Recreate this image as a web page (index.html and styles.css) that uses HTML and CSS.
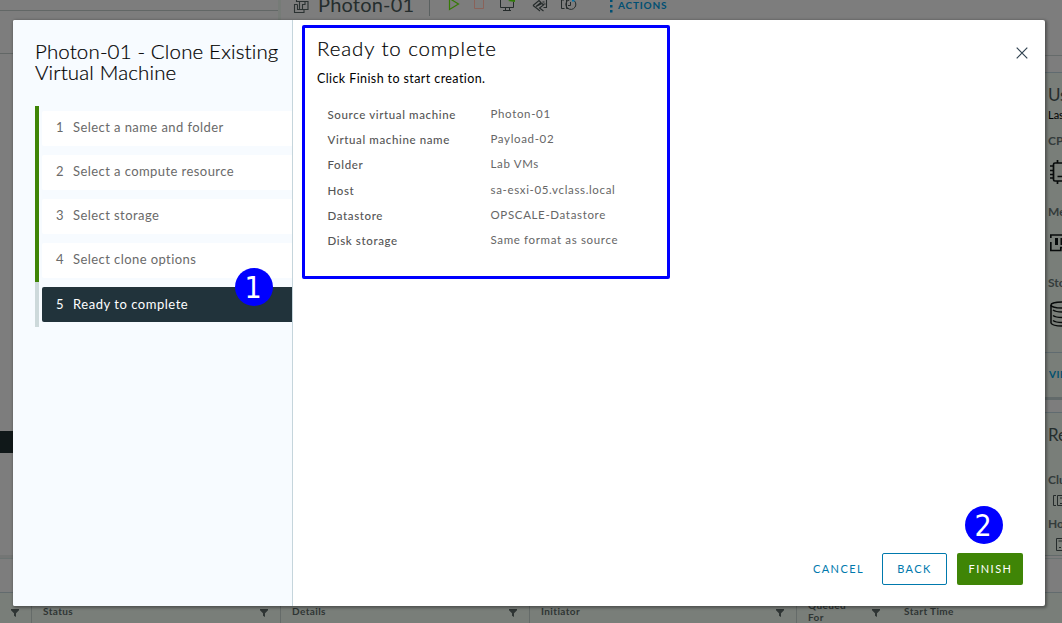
FILE: index.html
```html
<!DOCTYPE html>
<html lang="en">
<head>
<meta charset="utf-8">
<title>Photon-01 - Clone Existing Virtual Machine</title>
<link rel="stylesheet" href="styles.css">
</head>
<body>
<svg class="defs" width="0" height="0">
  <symbol id="filter" viewBox="0 0 8 8"><path d="M0 0h8v1.2L5 4.2v3.8L3 6.8V4.2L0 1.2z" fill="currentColor"/></symbol>
</svg>
<div class="app">
  <div class="workspace">
    <aside class="inventory">
      <div class="inv-head"></div>
      <div class="inv-tools"></div>
      <div class="inv-tree"><div class="inv-selected"></div></div>
    </aside>
    <div class="splitter"></div>
    <main class="object">
      <header class="object-head">
        <svg class="vm-icon" width="17" height="15" viewBox="0 0 17 15" fill="none" stroke="#2b3232" stroke-width="1.100"><path d="M4.500 4.500H1.500v8h9.500v-3M3.500 0v1.500h3M6.500 1.500h8.500v8h-8.500zM4.500 4.500v5h5v-5M12 1.500v3h-3"/></svg>
        <span class="object-name">Photon-01</span>
        <span class="head-divider"></span>
        <svg class="tools" width="130" height="16" viewBox="0 0 130 16" fill="none">
          <path d="M1.500 -1.500L10.500 4L1.500 9.500z" stroke="#367a05" stroke-width="1.200"/>
          <path d="M26.500 -2v10.500h9V-2" stroke="#8a6259"/>
          <g stroke="#252b2b"><path d="M52.500 -1v8.500h13V2M55 10.500h8M57.500 8v2.500M61.500 8v2.500"/></g>
          <path d="M60 1l5-3h2v4z" fill="#2f7a05"/>
          <g stroke="#252b2b" stroke-width="1.100"><path d="M88 -1h10.500v8.500h-3M85 5.500l6-5 2 2-5 4 6-3 1.500 1.500-4 3 4 3M85 5.500l4 3 3 2.500M94.500 2h2M95.500 4h2"/></g>
          <g stroke="#252b2b"><path d="M116 0h-2.500v8.500h3M121 0h-2.500v8.500h2M122 -.5a5 5 0 1 0 4.500 1.500M122.500 2v3.500h-2.500"/></g><path d="M124 -1h2.500v2.500H124z" fill="#0073a8"/>
        </svg>
        <svg class="dots" width="3" height="15" viewBox="0 0 3 15" fill="#004f73"><path d="M0 0h2.500v2H0zM0 5h2.500v2.500H0zM0 10h2.500v2.500H0z"/></svg>
        <span class="actions">ACTIONS</span>
      </header>
    </main>
    <section class="summary">
      <div class="sum-top"></div>
      <div class="sum-tabs"></div>
      <div class="card usage">
        <h3 class="card-title">Usage</h3>
        <p class="updated">Last updated</p>
        <p class="metric cpu">CPU</p>
        <svg class="m-icon" width="24" height="26" viewBox="0 0 24 26" fill="none" stroke="#080b0b" stroke-width="1.700"><rect x="3.500" y="4" width="18" height="18" rx="1.500"/><path d="M7.500 4V1M14 4V1M7.500 22v3M14 22v3M3.500 7H0M3.500 11.500H0M3.500 15.500H0M3.500 19H0M7.500 17.500h8"/></svg>
        <p class="metric mem">Memory</p>
        <svg class="m-icon" width="24" height="26" viewBox="0 0 24 26" fill="none" stroke="#080b0b" stroke-width="1.700"><path d="M.8 8V5h23v4M.8 12v8.500h10V17.500h3v3h10V12"/><path d="M6.500 8v7M12 8v7M17.500 8v7" stroke-width="3"/></svg>
        <p class="metric sto">Storage</p>
        <svg class="m-icon" width="24" height="26" viewBox="0 0 24 26" fill="none" stroke="#080b0b" stroke-width="1.500"><ellipse cx="12" cy="4" rx="11" ry="3"/><path d="M1 4v18c2 4 20 4 22 0V4M3 9c2 1.500 5 2 9 2s8-.5 10-2M3 14.500c2 1.500 5 2 9 2s8-.5 10-2M3 19.500c2 1.500 5 2 9 2s8-.5 10-2"/></svg>
        <div class="card-foot">VIEW STATS</div>
      </div>
      <div class="card related">
        <h3 class="card-title">Related Objects</h3>
        <p class="rel cl">Cluster</p>
        <svg class="r-icon" width="16" height="14" viewBox="0 0 16 14" fill="none" stroke="#252b2b"><path d="M3 1.500H.5v10H3M4.500 1.500h8v10h-8zM7 4h4M7 9.500h2"/></svg>
        <p class="rel ho">Host</p>
        <svg class="r-icon host" width="14" height="15" viewBox="0 0 14 15" fill="none" stroke="#252b2b"><path d="M1.500 .5h11v12h-11zM3.500 3h8M4 9.500h2"/></svg>
      </div>
      <div class="sum-rest"></div>
    </section>
  </div>
  <div class="task-bar"></div>
  <div class="tasks">
    <div class="th first"><svg class="funnel"><use href="#filter"/></svg></div>
    <div class="th status"><span>Status</span><svg class="funnel"><use href="#filter"/></svg></div>
    <div class="th details"><span>Details</span><svg class="funnel"><use href="#filter"/></svg></div>
    <div class="th initiator"><span>Initiator</span><svg class="funnel"><use href="#filter"/></svg></div>
    <div class="th queued"><span>Queued<br>For</span><svg class="funnel"><use href="#filter"/></svg></div>
    <div class="th start"><span>Start Time</span></div>
  </div>
</div>

<div class="modal">
  <nav class="sidebar">
    <h1 class="modal-title">Photon-01 - Clone Existing<br>Virtual Machine</h1>
    <ol class="steps">
      <li class="step"><div class="step-box"><span class="num">1</span><span>Select a name and folder</span></div></li>
      <li class="step"><div class="step-box"><span class="num">2</span><span>Select a compute resource</span></div></li>
      <li class="step"><div class="step-box"><span class="num">3</span><span>Select storage</span></div></li>
      <li class="step"><div class="step-box"><span class="num">4</span><span>Select clone options</span></div></li>
      <li class="step current"><div class="step-box"><span class="num">5</span><span>Ready to complete</span></div></li>
    </ol>
  </nav>
  <section class="page">
    <div class="page-top">
      <div class="outlined">
        <h2 class="page-title">Ready to complete</h2>
        <p class="hint">Click Finish to start creation.</p>
        <dl class="facts">
          <dt>Source virtual machine</dt><dd>Photon-01</dd>
          <dt>Virtual machine name</dt><dd>Payload-02</dd>
          <dt>Folder</dt><dd>Lab VMs</dd>
          <dt>Host</dt><dd>sa-esxi-05.vclass.local</dd>
          <dt>Datastore</dt><dd>OPSCALE-Datastore</dd>
          <dt>Disk storage</dt><dd>Same format as source</dd>
        </dl>
      </div>
      <svg class="close" width="12" height="12" viewBox="0 0 12 12" fill="none" stroke="#314351" stroke-width="1.200"><path d="M.7.700l10.600 10.600M11.300.7L.7 11.300"/></svg>
    </div>
    <footer class="buttons">
      <span class="btn cancel">CANCEL</span>
      <span class="btn back">BACK</span>
      <span class="btn finish">FINISH</span>
    </footer>
  </section>
  <span class="callout one">1</span>
  <span class="callout two">2</span>
</div>
</body>
</html>
```
FILE: styles.css
```css
* { box-sizing: border-box; }
body { margin: 0; width: 1062px; height: 623px; overflow: hidden; position: relative; background: #7d7d7d; font-family: Lato, "Open Sans", sans-serif; }
h1, h2, h3, p, ol, dl, dd { margin: 0; padding: 0; font-weight: 400; }
ol { list-style: none; }
.defs { position: absolute; }

/* Dimmed application */
.app { display: flex; flex-direction: column; height: 623px; overflow: hidden; color: #252d2d; }
.workspace { display: flex; height: 559px; border-bottom: 1px solid #6b7372; }
.inventory { width: 278px; display: flex; flex-direction: column; border-bottom: 3px solid #747675; }
.inv-head { height: 11px; border-bottom: 1px solid #626766; }
.inv-tools { height: 43px; border-bottom: 1px solid #626766; }
.inv-tree { padding-top: 377px; }
.inv-selected { height: 22px; background: #101819; }
.splitter { width: 3px; background: #767b77; }
.object { flex: 1; }
.object-head { display: flex; align-items: flex-start; height: 20px; padding-left: 12px; }
.vm-icon { flex: none; }
.object-name { margin-left: 8px; width: 111px; font-size: 20px; line-height: 20px; margin-top: -6px; letter-spacing: .2px; }
.head-divider { width: 1px; height: 16px; background: #5a6060; }
.tools { flex: none; margin-left: 18px; }
.dots { margin-left: 32px; flex: none; }
.actions { margin-left: 5px; font-size: 10px; line-height: 12px; margin-top: -1px; font-weight: 700; letter-spacing: .8px; color: #004f73; }
.summary { width: 24px; display: flex; flex-direction: column; overflow: hidden; white-space: nowrap; }
.sum-top { height: 56px; flex: none; border-bottom: 1px solid #666b6b; }
.sum-tabs { height: 16px; flex: none; }
.card { flex: none; padding-left: 10px; background: #797e79; border-top: 1px solid #606b70; display: flex; flex-direction: column; }
.usage { height: 328px; border-bottom: 3px solid #626a6a; }
.card-title { font-size: 17px; line-height: 20px; padding-top: 12px; flex: none; }
.updated { font-size: 11px; line-height: 14px; color: #000; margin-top: 3px; }
.metric { font-size: 12px; line-height: 14px; font-weight: 700; color: #343b3b; }
.cpu { margin-top: 12px; }
.mem { margin-top: 20px; }
.sto { margin-top: 20px; }
.m-icon { flex: none; margin-top: 11px; margin-left: 2px; }
.card-foot { margin: auto 0 0 -10px; padding-left: 11px; height: 45px; border-top: 1px solid #606b70; font-size: 10px; line-height: 43px; letter-spacing: .6px; font-weight: 700; color: #00506f; }
.related { margin-top: 12px; height: 144px; border-bottom: 1px solid #626a6a; }
.related .card-title { padding-top: 12px; }
.rel { font-size: 12px; line-height: 14px; font-weight: 700; color: #343b3b; }
.cl { margin-top: 28px; }
.ho { margin-top: 9px; }
.r-icon { flex: none; margin-left: 5px; margin-top: 7px; }
.host { margin-left: 7px; }
.task-bar { height: 34px; border-bottom: 1px solid #626b6e; }
.tasks { display: flex; height: 30px; background: #797e79; }
.th { display: flex; justify-content: space-between; border-right: 1px solid #656b69; padding: 12px 12px 0 11px; font-size: 10px; line-height: 12px; font-weight: 700; letter-spacing: .4px; color: #2f3534; }
.funnel { width: 8px; height: 8px; margin-top: 4px; flex: none; }
.first { width: 32px; }
.status, .details { width: 249px; }
.initiator { width: 267px; }
.queued { width: 96px; padding-right: 13px; border: 0; }
.queued span { margin-top: -6px; }
.start { border: 0; flex: 1; }

/* Wizard dialog above the application */
.modal { position: absolute; left: 13px; top: 20px; width: 1032px; height: 586px; display: flex; background: #fff; border-radius: 2px; box-shadow: 1px 1px 3px 1px rgba(0,0,0,.35); }
.sidebar { width: 280px; padding: 21px 0 0 22px; background: #f7fbff; border-right: 1px solid #c5d5dc; border-radius: 2px 0 0 2px; }
.modal-title { height: 65px; font-size: 20.500px; font-weight: 300; line-height: 21px; color: #000; white-space: nowrap; letter-spacing: .15px; -webkit-text-stroke: .2px #000; }
.step { height: 44px; padding: 5px 0 0 3px; border-left: 4px solid #3f8506; }
.step-box { height: 34.500px; display: flex; align-items: center; background: #fff; border-radius: 2px 0 0 2px; padding: 0 0 2px 14px; font-size: 13px; letter-spacing: .43px; color: #6a6a6a; }
.num { width: 17px; }
.current { height: 45px; border-color: #cdd9db; }
.current .step-box { height: 35px; background: #21333b; color: #fff; letter-spacing: .53px; }
.page { flex: 1; display: flex; flex-direction: column; justify-content: space-between; padding: 5px 17px 21px 9px; }
.page-top { display: flex; justify-content: space-between; }
.outlined { width: 368px; height: 254px; border: 3px solid #00f; border-radius: 2px; padding: 8px 0 0 12px; }
.page-title { font-size: 20.500px; font-weight: 300; line-height: 24px; letter-spacing: .9px; color: #000; -webkit-text-stroke: .2px #000; }
.hint { font-size: 12.500px; line-height: 16px; margin-top: 11px; letter-spacing: .4px; color: #000; }
.facts { display: grid; grid-template-columns: 163px 1fr; grid-auto-rows: 25.200px; padding: 19px 0 0 10.500px; font-size: 11.500px; line-height: 16px; letter-spacing: .65px; color: #666; }
.facts dt { padding-top: 1px; letter-spacing: .62px; font-weight: 500; color: #555; }
.close { margin: 22px 0 0; }
.buttons { display: flex; justify-content: flex-end; padding-right: 5px; gap: 10px; }
.btn { height: 32px; display: flex; align-items: center; justify-content: center; border-radius: 2px; padding: 0 0 1px 1px; font-size: 11px; letter-spacing: 1.450px; color: #0079ad; }
.cancel { width: 70px; margin-right: -1px; }
.back { width: 65px; border: 1px solid #0079ad; padding-left: 0; }
.finish { width: 66px; background: #3f8506; color: #fff; }
.callout { position: absolute; width: 38px; height: 38px; border-radius: 50%; background: #00f; color: #fff; font: 30px/40px "DejaVu Sans Condensed", "DejaVu Sans", sans-serif; text-align: center; }
.one { left: 222px; top: 248px; padding-right: 2px; }
.two { left: 952px; top: 486px; padding-right: 2px; }
```
